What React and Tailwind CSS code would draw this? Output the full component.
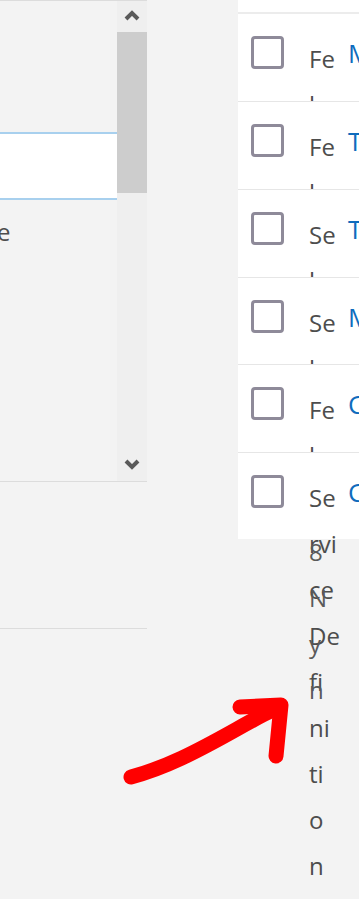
import React from "react";

const rows = [
  { h: "h-[88px] border-b border-[#e6e6e6] overflow-hidden", lines: ["Fe", "b"], link: "M" },
  { h: "h-[88px] border-b border-[#e6e6e6] overflow-hidden", lines: ["Fe", "b"], link: "T" },
  { h: "h-[88px] border-b border-[#e6e6e6] overflow-hidden", lines: ["Se", "l"], link: "T" },
  { h: "h-[87px] border-b border-[#e6e6e6] overflow-hidden", lines: ["Se", "l"], link: "M" },
  { h: "h-[88px] border-b border-[#e6e6e6] overflow-hidden", lines: ["Fe", "b"], link: "C" },
  {
    h: "h-[86px]",
    lines: ["Se", "rvi", "ce", "De", "fi", "ni", "ti", "o", "n"],
    link: "C",
    ghost: ["8", "N", "y", "n"],
  },
];

function Chevron({ up }) {
  return (
    <svg width="16" height="12" viewBox="0 0 16 12">
      <polyline
        points={up ? "2,9 8,3 14,9" : "2,3 8,9 14,3"}
        fill="none"
        stroke="#5a5a5a"
        strokeWidth="4"
      />
    </svg>
  );
}

function Row({ row }) {
  return (
    <div className={`relative flex items-start ${row.h}`}>
      <div className="ml-[13px] mt-[22px] h-[33px] w-[33px] shrink-0 rounded-[4px] border-[3px] border-[#8e8a99]" />
      <div className="relative ml-[25px] w-[26px] shrink-0 pt-[22px] text-[24px] leading-[46px] text-[#4d4d4d]">
        {row.lines.map((l, i) => (
          <div key={i} className="whitespace-nowrap">
            {l}
          </div>
        ))}
        {row.ghost && (
          <div className="absolute left-0 top-[76px] text-[24px] leading-[46px] text-[#5a5a5a]">
            {row.ghost.map((l, i) => (
              <div key={i}>{l}</div>
            ))}
          </div>
        )}
      </div>
      <div className="ml-[13px] mt-[26px] whitespace-nowrap text-[26px] leading-[26px] text-[#0f6cbd]">
        {row.link}
      </div>
    </div>
  );
}

export default function App() {
  return (
    <div className="relative flex h-[899px] w-[359px] overflow-hidden bg-[#f3f3f3] font-['Open_Sans',sans-serif]">
      {/* left pane */}
      <div className="flex w-[147px] shrink-0 flex-col">
        <div className="flex h-[482px] border-y border-[#dcdcdc]">
          <div className="flex w-[117px] flex-col">
            <div className="mt-[131px] h-[68px] border-y-2 border-[#a8d0ee] bg-white" />
            <div className="mt-[16px] -ml-[3px] text-[24px] leading-[32px] text-[#4d4d4d]">e</div>
          </div>
          <div className="flex w-[30px] flex-col bg-[#efefef]">
            <div className="flex h-[31px] items-center justify-center pb-[2px]">
              <Chevron up />
            </div>
            <div className="h-[161px] bg-[#cdcdcd]" />
            <div className="flex-1" />
            <div className="flex h-[30px] items-center justify-center pb-[4px]">
              <Chevron />
            </div>
          </div>
        </div>
        <div className="mt-[146px] h-px bg-[#dcdcdc]" />
      </div>

      {/* right card */}
      <div className="ml-[91px] w-[140px] shrink-0">
        <div className="bg-white">
          <div className="h-[12px]" />
          <div className="h-[2px] bg-[#ececec]" />
          {rows.map((r, i) => (
            <Row key={i} row={r} />
          ))}
        </div>
      </div>

      {/* annotation arrow */}
      <svg className="pointer-events-none absolute left-0 top-0" width="359" height="899">
        <g fill="none" stroke="#ff0000" strokeWidth="15" strokeLinecap="round" strokeLinejoin="round">
          <path d="M131 777 C 165 768, 196 752, 237 729 S 268 713, 280 707" />
          <path d="M240 707 L 281 705 L 276 756" />
        </g>
      </svg>
    </div>
  );
}
